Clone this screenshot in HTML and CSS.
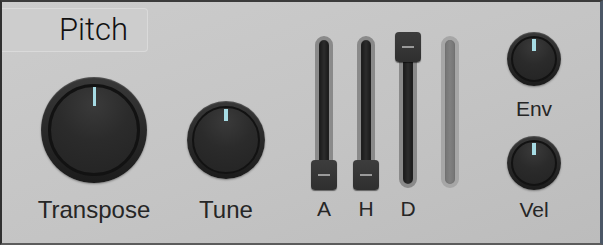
FILE: index.html
```html
<html><head>
<meta charset="utf-8">
<link rel="stylesheet" href="styles.css">
</head>
<body>

<div class="panel">

    <div class="left">
        <div class="tab">Pitch</div>
        <div class="knobRow">
            <div class="group transpose">
                <div class="knob big"><div class="face"><div class="mark"></div></div></div>
                <div class="label">Transpose</div>
            </div>
            <div class="group tune">
                <div class="knob mid"><div class="face"><div class="mark"></div></div></div>
                <div class="label">Tune</div>
            </div>
        </div>
    </div>

    <div class="sliders">
        <div class="slider">
            <div class="track"><div class="handle" style="top: 128px"></div></div>
            <div class="slabel">A</div>
        </div>
        <div class="slider">
            <div class="track"><div class="handle" style="top: 128px"></div></div>
            <div class="slabel">H</div>
        </div>
        <div class="slider">
            <div class="track"><div class="handle" style="top: 0px"></div></div>
            <div class="slabel">D</div>
        </div>
        <div class="slider off">
            <div class="track"></div>
            <div class="slabel"></div>
        </div>
    </div>

    <div class="right">
        <div class="knob small env"><div class="face"><div class="mark"></div></div></div>
        <div class="klabel">Env</div>
        <div class="knob small vel"><div class="face"><div class="mark"></div></div></div>
        <div class="klabel">Vel</div>
    </div>

</div>

</body>
</html>
```

FILE: styles.css
```css
* {
    box-sizing: border-box;
}

body {
    margin: 0;
    font-family: "Liberation Sans", Arial, sans-serif;
}

.panel {
    display: flex;
    width: 603px;
    height: 245px;
    background: linear-gradient(160deg, #cccccc 0%, #c4c4c4 55%, #bcbcbc 100%);
    border-top: 2px solid #3b3b3b;
    border-left: 2px solid #303030;
    border-right: 3px solid #4b5766;
    border-bottom: 2px solid #5c5c5c;
    overflow: hidden;
}

.left {
    display: flex;
    flex-direction: column;
    width: 264px;
}

.tab {
    margin-top: 6px;
    width: 146px;
    height: 44px;
    padding-left: 57px;
    background-color: #cdcdcd;
    border: 1px solid #dadada;
    border-left: none;
    border-radius: 0 4px 4px 0;
    color: #111111;
    font-family: Roboto, "Liberation Sans", sans-serif;
    font-size: 31px;
    line-height: 42px;
    font-weight: 300;
}

.knobRow {
    display: flex;
    align-items: flex-end;
    margin-top: 25px;
}

.group {
    display: flex;
    flex-direction: column;
    align-items: center;
}

.transpose {
    width: 120px;
    margin-left: 32px;
}

.tune {
    width: 80px;
    margin-left: 32px;
}

.label {
    color: #262626;
    font-size: 24px;
    line-height: 24px;
    height: 24px;
}

.transpose .label {
    margin-top: 15px;
}

.tune .label {
    margin-top: 19px;
}

/* knobs */

.knob {
    border-radius: 50%;
    background: linear-gradient(#383838, #1b1b1b);
    box-shadow: 0 1px 2px rgba(0, 0, 0, 0.35), inset 0 1px 1px rgba(255, 255, 255, 0.14);
}

.face {
    position: relative;
    width: 100%;
    height: 100%;
    border-radius: 50%;
    border: 3px solid #121212;
    background: radial-gradient(circle at 50% 20%, #3a3a3a 0%, #2b2b2b 45%, #232323 100%);
}

.mark {
    position: absolute;
    left: 50%;
    top: 0;
    width: 3px;
    margin-left: -1.5px;
    background-color: #a6dbe4;
}

.big {
    width: 106px;
    height: 106px;
    padding: 7px;
}

.big .mark {
    height: 19px;
}

.mid {
    width: 78px;
    height: 78px;
    padding: 5px;
}

.mid .face {
    border-width: 2px;
}

.mid .mark {
    top: 1px;
    height: 12px;
    width: 4px;
    margin-left: -2px;
}

.small {
    width: 54px;
    height: 54px;
    padding: 4px;
}

.small .face {
    border-width: 2px;
}

.small .mark {
    top: 1px;
    height: 12px;
    width: 4px;
    margin-left: -2px;
}

/* sliders */

.sliders {
    display: flex;
    margin-left: 37px;
    padding-top: 30px;
}

.slider {
    display: flex;
    flex-direction: column;
    align-items: center;
    width: 42px;
}

.track {
    position: relative;
    width: 18px;
    height: 158px;
    margin: 0 auto;
}

.track::before {
    content: "";
    position: absolute;
    left: 0;
    right: 0;
    top: 4px;
    bottom: 2px;
    border-radius: 9px;
    border: 4px solid #8a8a8a;
    background: linear-gradient(90deg, #181818, #2c2c2c 50%, #181818);
    box-shadow: inset 0 0 1px #555;
}

.off .track::before {
    border-color: #a6a6a6;
    background: linear-gradient(90deg, #747474, #808080 50%, #747474);
}

.handle {
    position: absolute;
    left: -4px;
    width: 26px;
    height: 30px;
    border-radius: 4px;
    background: linear-gradient(#3d3d3d, #2f2f2f);
    box-shadow: 0 1px 1px rgba(0, 0, 0, 0.5);
}

.handle::after {
    content: "";
    position: absolute;
    left: 7px;
    top: 14px;
    width: 12px;
    height: 2px;
    background-color: #9a9a9a;
}

.slabel {
    margin-top: 8px;
    height: 21px;
    color: #262626;
    font-size: 21px;
    line-height: 21px;
}

/* env / vel */

.right {
    display: flex;
    flex-direction: column;
    align-items: center;
    width: 60px;
    margin-left: 33px;
    padding-top: 30px;
}

.klabel {
    height: 21px;
    color: #262626;
    font-size: 21px;
    line-height: 21px;
    margin-top: 12px;
}

.vel {
    margin-top: 17px;
}

.vel + .klabel {
    margin-top: 9px;
}
```
